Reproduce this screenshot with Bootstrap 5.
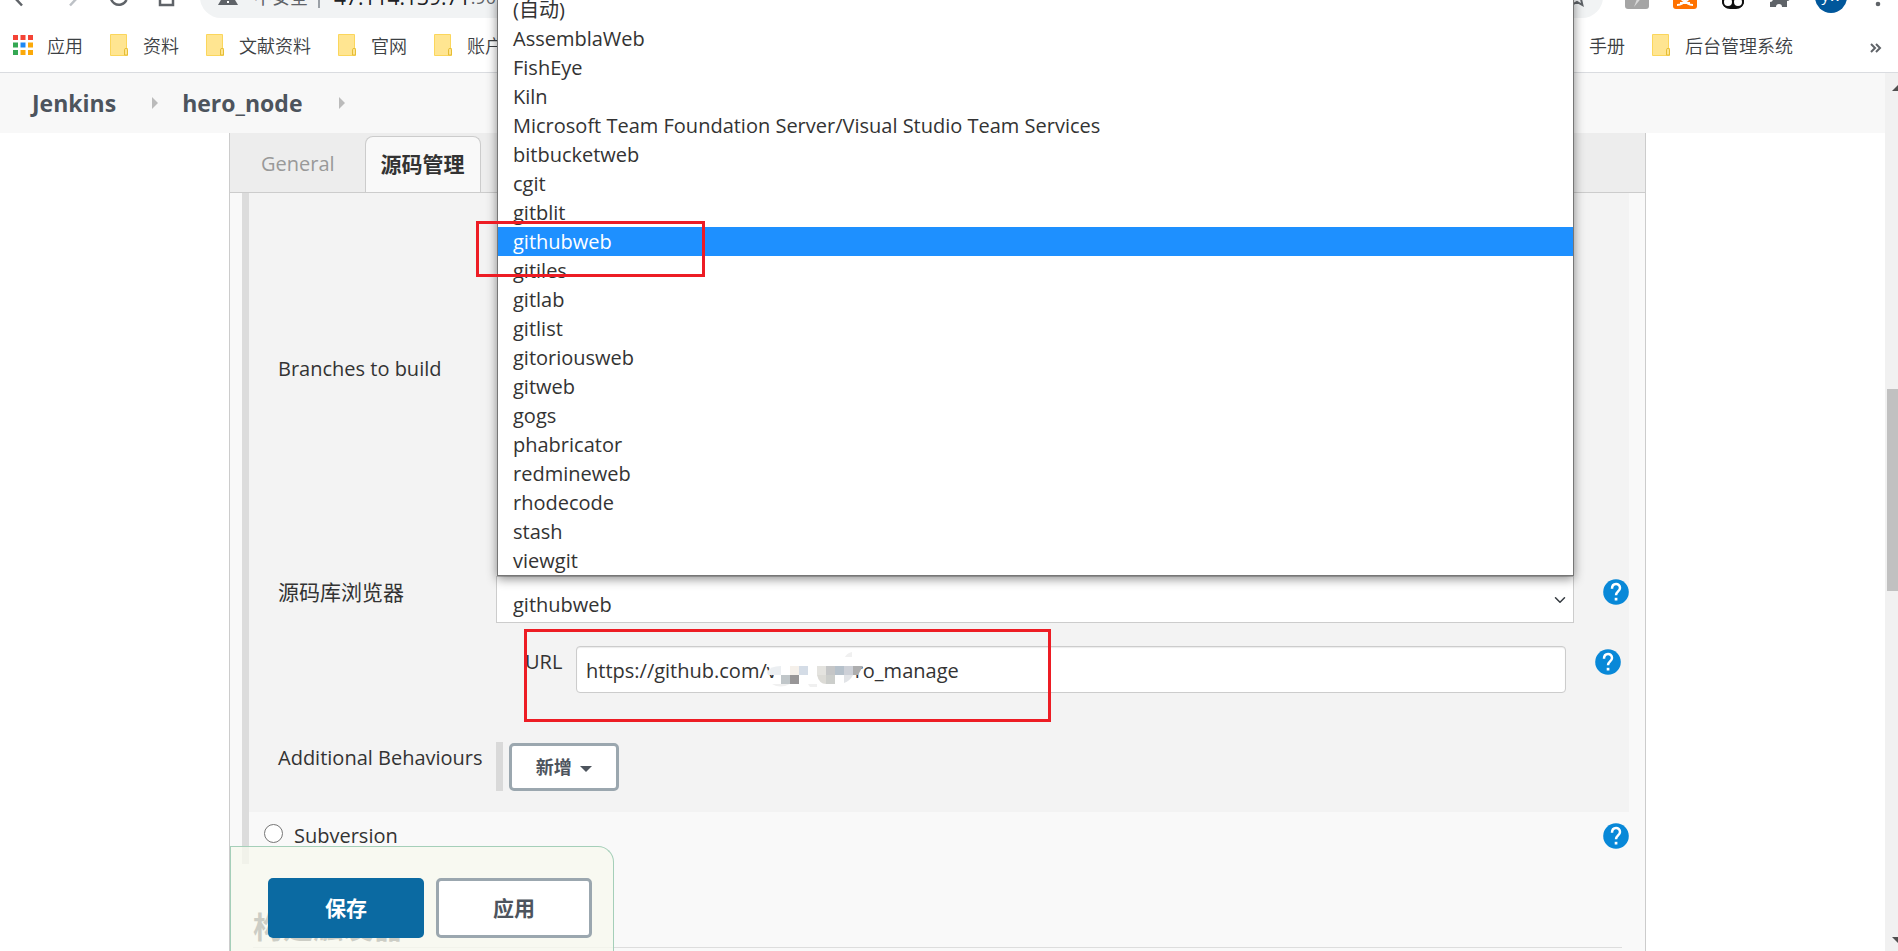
<!DOCTYPE html>
<html lang="zh-CN">
<head>
<meta charset="utf-8">
<meta name="viewport" content="width=device-width, initial-scale=1">
<title>hero_node Config [Jenkins]</title>
<link href="https://cdn.jsdelivr.net/npm/bootstrap@5.3.0/dist/css/bootstrap.min.css" rel="stylesheet">
<style>
  body { font: 20px/32px "Open Sans", "Noto Sans CJK SC", sans-serif; color: #333; background: #fff; }
  a { color: inherit; text-decoration: none; }
  .flex-fill { min-height: 0; }

  /* browser chrome, scrolled partly above the window */
  .toolbar-strip { height: 42px; margin-top: -24px; padding: 0 17px 0 12px; color: #5f6368; }
  .nav-icons { width: 188px; gap: 28px; }
  .omnibox { height: 42px; border-radius: 21px; background: #f1f3f4; padding: 0 16px 0 18px; font-size: 18px; }
  .omnibox .host { font-size: 21px; color: #202124; }
  .omnibox .sep { width: 2px; height: 22px; background: #9aa0a6; margin: 0 14px 0 10px; }
  .ext-icons { gap: 24px; padding-left: 22px; }
  .profile-pic { width: 32px; height: 32px; background: #01579b; color: #fff; font-size: 15px; line-height: 28px; }
  .bookmarks-strip { height: 55px; border-bottom: 1px solid #dadce0; padding: 0 16px 0 13px; gap: 27px; font: 18px/28px "Noto Sans CJK SC", sans-serif; font-weight: 350; color: #3c4043; }
  .bookmarks-strip a { gap: 15px; }
  .bookmarks-strip a.apps-link { gap: 14px; }
  .more-marks { margin-left: 50px; }

  /* page */
  .crumbs { height: 60px; padding-left: 32px; background: #f8f8f8; font-size: 23px; font-weight: 700; color: #4d545d; }
  .crumbs svg { margin: 0 24px 0 36px; }
  .panel { margin: 0 239px 0 229px; border: solid #ccc; border-width: 0 1px; background: #f9f9f9; }
  .tab-strip { height: 60px; background: #ededed; border-bottom: 1px solid #ccc; padding-left: 15px; gap: 14px; }
  .tab-strip a { height: 56px; line-height: 56px; padding: 0 16px; color: #999; }
  .tab-strip a.active { font-weight: 700; font-size: 21px; line-height: 54px; color: #333; background: #f9f9f9; border: 1px solid #ccc; border-bottom: 0; border-radius: 8px 8px 0 0; padding: 0 15px; }
  .scm { margin: 0 16px 0 12px; border-left: 7px solid #dcdcdc; }
  .scm-block { background: #f3f3f3; padding: 0 0 21px 29px; }
  .cell-label { width: 218px; flex: none; }
  .cell-label.cjk { font-size: 21px; }
  .branches { height: 383px; padding-top: 160px; }
  .help-btn { width: 26px; height: 26px; flex: none; border: 0; padding: 0; background: none; line-height: 0; margin: 3px 0 0 29px; }
  .form-select.browser { height: 47px; border: 1px solid #ccc; border-radius: 0; font-size: 20px; line-height: 32px; padding: 12px 36px 1px 16px; background-color: #fff; background-position: right 5px center; color: #333; }
  .popup { left: 1px; right: 0; bottom: 100%; z-index: 10; background: #fff; border: 1px solid #767676; box-shadow: 0 3px 10px rgba(0,0,0,.45); }
  .popup button { display: block; width: 100%; height: 29px; line-height: 29px; border: 0; background: none; padding: 0 15px; text-align: left; color: #333; }
  .popup button.chosen { background: #1e90ff; color: #fff; }
  .marker { border: 3px solid #ed1c24; pointer-events: none; z-index: 20; }
  .marker-option { left: -22px; top: -6px; width: 229px; height: 56px; }
  .marker-url { left: -1px; top: -17px; width: 527px; height: 93px; }
  .url-line { margin: 23px 8px 0 247px; }
  .url-line label { width: 51px; flex: none; }
  .url-input { height: 47px; border: 1px solid #ccc; border-radius: 4px; box-shadow: inset 0 1px 1px rgba(0,0,0,.08); font-size: 20px; line-height: 32px; padding: 8px 9px 6px; color: #333; }
  .mosaic { left: 191px; top: 4px; }
  .behaviours { margin-top: 49px; }
  .repeat-bar { width: 7px; height: 49px; background: #d9d9d9; margin-right: 6px; }
  .btn.line-btn, .btn.line-btn:hover { border: 3px solid #9ba7af; border-radius: 5px; background: #fff; color: #4d545d; font-weight: 700; }
  .btn.add-btn { width: 110px; height: 48px; font-size: 18px; line-height: 28px; padding: 7px 0; margin-top: 1px; }
  .svn-line { height: 52px; padding: 8px 0 0 15px; }
  .svn-line .form-check-input { width: 19px; height: 19px; margin: 4px 11px 0 0; border-color: #767676; background-color: #fff; }
  .section-title { font-size: 30px; line-height: 40px; font-weight: 700; margin: 43px 23px 0; border-bottom: 1px solid #ddd; }
  .save-bar { left: 0; bottom: 0; height: 105px; padding: 31px 21px 0 37px; gap: 12px; border: 1px solid #a5cfb9; border-bottom: 0; border-radius: 0 16px 0 0; background: rgba(247,248,238,.78); }
  .save-bar .btn { width: 156px; height: 60px; font-size: 21px; font-weight: 700; border-radius: 5px; padding-top: 8px; }
  .btn.save-btn { background: #0b6aa2; color: #fff; }
  .scroll-rail { width: 13px; background: #f1f1f1; }
  .scroll-thumb { width: 11px; height: 202px; margin: 298px 0 0 2px; background: #c1c1c1; }
</style>
</head>
<body class="vh-100 overflow-hidden d-flex flex-column">

<svg width="0" height="0" class="position-absolute">
  <symbol id="folder" viewBox="0 0 18 22"><path d="M.5.5h16v14h1v7H.5z" fill="#ffe591" stroke="#fbd65c"/><path d="M14.500 20v-4.500q0-1 1.500-1t1.500 1V21h-3z" fill="#ffe591" stroke="#e5bd36"/></symbol>
  <symbol id="help" viewBox="0 0 26 26"><circle cx="13" cy="13" r="12.800" fill="#0888d8"/><path d="M9 9.800C9 3.500 17 3.800 17 9c0 3.300-4 3.500-4 7.200" fill="none" stroke="#fff" stroke-width="2.500"/><path d="M11.700 18.800h2.700v2.700h-2.700z" fill="#fff"/></symbol>
</svg>

<header>
  <div class="toolbar-strip d-flex align-items-center">
    <div class="nav-icons d-flex align-items-center flex-shrink-0">
      <svg width="20" height="20" viewBox="0 0 20 20" fill="none" stroke="#5f6368" stroke-width="2.500"><path d="M10 1 2 10l8 8.500M2 10h17"/></svg>
      <svg width="20" height="20" viewBox="0 0 20 20" fill="none" stroke="#bdc1c6" stroke-width="2.500"><path d="m9 1 9 9-8 8.500M18 10H2"/></svg>
      <svg width="20" height="20" viewBox="0 0 20 20" fill="none" stroke="#5f6368" stroke-width="2.500"><path d="M18 5a8.300 8.300 0 1 0 .5 8M19 1v6h-6"/></svg>
      <svg width="20" height="20" viewBox="0 0 20 20" fill="none" stroke="#5f6368" stroke-width="2.500"><path d="M1 9 10 1l9 8M4 7v11h13V7"/></svg>
    </div>
    <div class="omnibox d-flex align-items-center flex-fill">
      <svg width="20" height="18" viewBox="0 0 20 18"><path d="M10 0 0 17h20z" fill="#5f6368"/><path d="M9 6h2v5H9zM9 13h2v2H9z" fill="#fff"/></svg>
      <span class="ms-3">不安全</span><span class="sep"></span>
      <span class="host">47.114.139.71</span><span>:90</span>
      <svg class="ms-auto" width="20" height="20" viewBox="0 0 20 20" fill="none" stroke="#5f6368" stroke-width="2"><path d="m10 2 2.500 5.500 6 .5-4.500 4 1.400 6L10 15l-5.400 3L6 12 1.500 8l6-.5z"/></svg>
    </div>
    <div class="ext-icons d-flex align-items-center flex-shrink-0">
      <svg width="24" height="24" viewBox="0 0 24 24"><rect width="24" height="24" rx="3" fill="#a5a5a5"/><path d="M14 2 6 14h6L9 22l9-11h-6z" fill="#d8d8d8"/></svg>
      <svg width="24" height="24" viewBox="0 0 24 24"><rect width="24" height="24" rx="3" fill="#ff7200"/><path d="M5 13h14M8 13l2 3M16 13l-2 3M4 20q6 0 8-5 2 5 8 5M7 18h10" fill="none" stroke="#fff" stroke-width="2"/></svg>
      <svg width="24" height="24" viewBox="0 0 24 24" fill="#fff" stroke="#111" stroke-width="2"><rect x="2" y="3" width="20" height="20" rx="7" fill="#111"/><circle cx="7" cy="17" r="5"/><circle cx="17" cy="17" r="5"/></svg>
      <svg width="22" height="24" viewBox="0 0 22 24"><path d="M1 5h5a3 3 0 1 1 6 0h6v5a3 3 0 1 1 0 6v6h-5a3 3 0 0 0-6 0H1v-5a3 3 0 0 0 0-6z" fill="#5f6368"/></svg>
      <span class="profile-pic rounded-circle text-center">yw</span>
      <svg class="ms-1" width="6" height="20" viewBox="0 0 6 20" fill="#5f6368"><circle cx="3" cy="3" r="2.300"/><circle cx="3" cy="10" r="2.300"/><circle cx="3" cy="17" r="2.300"/></svg>
    </div>
  </div>
  <nav class="bookmarks-strip d-flex align-items-center text-nowrap">
    <a href="#" class="apps-link d-flex align-items-center">
      <svg width="20" height="20" viewBox="0 0 20 20"><path d="M0 0h5v5H0zM7.500 0h5v5h-5zM15 0h5v5h-5z" fill="#f44336"/><path d="M0 7.500h5v5H0zM0 15h5v5H0z" fill="#34a853"/><path d="M7.500 7.500h5v5h-5z" fill="#1e88f5"/><path d="M15 7.500h5v5h-5zM7.500 15h5v5h-5zM15 15h5v5h-5z" fill="#fba90a"/></svg>应用</a>
    <a href="#" class="d-flex align-items-center"><svg width="18" height="22"><use href="#folder"/></svg>资料</a>
    <a href="#" class="d-flex align-items-center"><svg width="18" height="22"><use href="#folder"/></svg>文献资料</a>
    <a href="#" class="d-flex align-items-center"><svg width="18" height="22"><use href="#folder"/></svg>官网</a>
    <a href="#" class="d-flex align-items-center"><svg width="18" height="22"><use href="#folder"/></svg>账户</a>
    <a href="#" class="ms-auto">手册</a>
    <a href="#" class="d-flex align-items-center"><svg width="18" height="22"><use href="#folder"/></svg>后台管理系统</a>
    <a href="#" class="more-marks" aria-label="更多书签"><svg width="12" height="12" viewBox="0 0 12 12" fill="none" stroke="#5f6368" stroke-width="2"><path d="m1 2 4 4-4 4M6 2l4 4-4 4"/></svg></a>
  </nav>
</header>

<div class="d-flex flex-fill">
  <main class="flex-fill d-flex flex-column">
    <nav class="crumbs d-flex align-items-center flex-shrink-0">
      <a href="#">Jenkins</a>
      <svg width="6" height="12" viewBox="0 0 6 12"><path d="M0 0v12l6-6z" fill="#bbb"/></svg>
      <a href="#">hero_node</a>
      <svg width="6" height="12" viewBox="0 0 6 12"><path d="M0 0v12l6-6z" fill="#bbb"/></svg>
    </nav>

    <div class="panel flex-fill position-relative">
      <nav class="tab-strip d-flex align-items-end">
        <a href="#">General</a>
        <a href="#" class="active">源码管理</a>
      </nav>

      <form>
        <div class="scm">
          <div class="scm-block">
            <div class="branches">Branches to build</div>

            <div class="d-flex">
              <label class="cell-label cjk" for="repoBrowser">源码库浏览器</label>
              <div class="flex-fill position-relative">
                <select id="repoBrowser" class="form-select browser"><option>githubweb</option></select>
                <div class="popup position-absolute">
                  <button type="button">(自动)</button>
                  <button type="button">AssemblaWeb</button>
                  <button type="button">FishEye</button>
                  <button type="button">Kiln</button>
                  <button type="button">Microsoft Team Foundation Server/Visual Studio Team Services</button>
                  <button type="button">bitbucketweb</button>
                  <button type="button">cgit</button>
                  <button type="button">gitblit</button>
                  <div class="position-relative"><button type="button" class="chosen">githubweb</button><span class="marker marker-option position-absolute"></span></div>
                  <button type="button">gitiles</button>
                  <button type="button">gitlab</button>
                  <button type="button">gitlist</button>
                  <button type="button">gitoriousweb</button>
                  <button type="button">gitweb</button>
                  <button type="button">gogs</button>
                  <button type="button">phabricator</button>
                  <button type="button">redmineweb</button>
                  <button type="button">rhodecode</button>
                  <button type="button">stash</button>
                  <button type="button">viewgit</button>
                </div>
              </div>
              <button type="button" class="help-btn" aria-label="Help"><svg width="26" height="26"><use href="#help"/></svg></button>
            </div>

            <div class="url-line d-flex position-relative">
              <label for="repoUrl">URL</label>
              <div class="flex-fill position-relative">
                <input id="repoUrl" type="text" class="form-control url-input" value="https://github.com/v               ro_manage">
                <svg class="mosaic position-absolute" width="98" height="38" viewBox="0 0 98 38"><path d="M4 16 14 8h74l-4 28H10z" fill="#fff"/><path d="M0 22q3-6 14-6v9H1z" fill="#eceff2"/><path d="M23 16h9v9h-9z" fill="#f5f0ea"/><path d="M32 16h9v9h-9z" fill="#d4dce6"/><path d="M14 25h9v9h-9z" fill="#c0c6c9"/><path d="M23 25h9v9h-9z" fill="#989697"/><path d="M50 16h9v9h-9z" fill="#e4e3df"/><path d="M59 16h9v9h-9z" fill="#c5c6c7"/><path d="M68 16h9v9h-9z" fill="#b6c1cb"/><path d="M77 16h9v9h-9z" fill="#cdd0d7"/><path d="M86 16h10l-5 9h-5z" fill="#adadae"/><path d="M50 25h9v9q-7 0-9-9z" fill="#dcdbd6"/><path d="M59 25h9v9h-9z" fill="#cccecb"/><path d="M77 25h9q-3 6-9 8z" fill="#e2e4e7"/><path d="M78 7q2-4 7-5v5zM5 34h18q-10 5-18 0zM41 34h9v3h-7z" fill="#f0f0f0"/></svg>
              </div>
              <button type="button" class="help-btn" aria-label="Help"><svg width="26" height="26"><use href="#help"/></svg></button>
              <span class="marker marker-url position-absolute"></span>
            </div>

            <div class="behaviours d-flex">
              <span class="cell-label">Additional Behaviours</span>
              <span class="repeat-bar"></span>
              <button type="button" class="btn line-btn add-btn">新增 <svg class="ms-1" width="12" height="6" viewBox="0 0 12 6"><path d="M0 0h12L6 6z" fill="#4d545d"/></svg></button>
            </div>
          </div>

          <div class="svn-line d-flex">
            <input class="form-check-input" type="radio" id="svn" name="scm">
            <label for="svn">Subversion</label>
            <button type="button" class="help-btn ms-auto" aria-label="Help"><svg width="26" height="26"><use href="#help"/></svg></button>
          </div>
        </div>

        <h2 class="section-title">构建触发器</h2>

        <div class="save-bar position-absolute d-flex">
          <button type="button" class="btn save-btn">保存</button>
          <button type="button" class="btn line-btn">应用</button>
        </div>
      </form>
    </div>
  </main>

  <div class="scroll-rail d-flex flex-column flex-shrink-0">
    <svg class="ms-auto mt-2 pt-1" width="6" height="10" viewBox="0 0 6 6" preserveAspectRatio="none"><path d="M0 6 6 0v6z" fill="#505050"/></svg>
    <div class="scroll-thumb"></div>
    <svg class="ms-auto mt-auto mb-2" width="6" height="6" viewBox="0 0 6 6"><path d="M0 0h6v6z" fill="#505050"/></svg>
  </div>
</div>

<script src="https://cdn.jsdelivr.net/npm/bootstrap@5.3.0/dist/js/bootstrap.bundle.min.js"></script>
</body>
</html>
